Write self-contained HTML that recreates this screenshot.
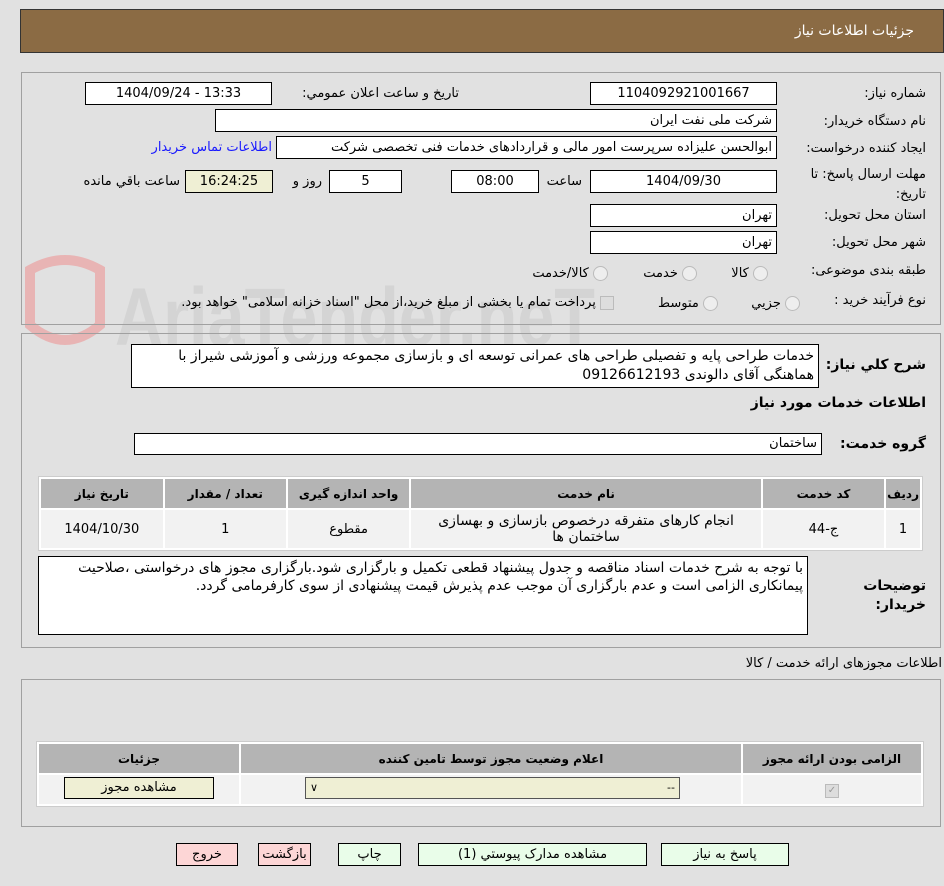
<!DOCTYPE html>
<html><head><meta charset="utf-8">
<style>
body{margin:0;width:944px;height:886px;background:#e1e1e1;font-family:"DejaVu Sans","Liberation Sans",sans-serif;font-size:13px;color:#000;position:relative;overflow:hidden;direction:rtl}
.a{position:absolute;white-space:nowrap}
.b{position:absolute;background:#fff;border:1px solid #000;box-sizing:border-box;padding:0 4px;line-height:22px;white-space:nowrap;overflow:hidden}
.c{text-align:center}
.p{position:absolute;border:1px solid #a0a0a0;box-sizing:border-box}
.lbl{position:absolute;white-space:nowrap;text-align:right}
table{border-collapse:separate;border-spacing:2px;position:absolute;background:#fff;border:1px solid #ccc}
th{background:#b4b4b4;font-weight:bold;font-size:12px;height:27px}
td{background:#f2f2f2;text-align:center}
.btn{position:absolute;border:1px solid #000;box-sizing:border-box;text-align:center;line-height:21px;height:23px}
.r{display:inline-block;width:13px;height:13px;border-radius:50%;border:1px solid #bbb;background:#eee;vertical-align:middle}
</style></head><body>
<div class="a" style="left:20px;top:9px;width:924px;height:44px;background:#8b6b44;border:1px solid #333;box-sizing:border-box"></div>
<div class="a" style="right:30px;top:23px;color:#fff;font-size:14px">جزئیات اطلاعات نیاز</div>

<!-- watermark -->
<svg class="a" style="left:20px;top:245px" width="580" height="110"><path d="M10 25 Q45 5 80 25 L80 80 Q45 110 10 80 Z" fill="none" stroke="#e8b4b4" stroke-width="10"/><text x="95" y="100" font-size="82" font-weight="bold" fill="#d4d4d4" font-family="Liberation Sans Narrow, Liberation Sans" textLength="480" lengthAdjust="spacingAndGlyphs" style="direction:ltr">AriaTender.neT</text></svg>

<div class="p" style="left:21px;top:72px;width:920px;height:253px"></div>
<div class="lbl" style="right:18px;top:86px">شماره نیاز:</div>
<div class="b c" style="left:590px;top:82px;width:187px;height:23px">1104092921001667</div>
<div class="lbl" style="right:485px;top:86px">تاریخ و ساعت اعلان عمومي:</div>
<div class="b c" style="left:85px;top:82px;width:187px;height:23px;direction:ltr">1404/09/24 - 13:33</div>
<div class="lbl" style="right:18px;top:114px">نام دستگاه خریدار:</div>
<div class="b" style="left:215px;top:109px;width:562px;height:23px">شرکت ملی نفت ایران</div>
<div class="lbl" style="right:18px;top:141px">ایجاد کننده درخواست:</div>
<div class="b" style="left:276px;top:136px;width:501px;height:23px">ابوالحسن علیزاده سرپرست امور مالی و قراردادهای خدمات فنی تخصصی شرکت</div>
<div class="lbl" style="right:672px;top:140px;color:#1a1aff">اطلاعات تماس خریدار</div>
<div class="lbl" style="right:18px;top:165px;width:140px;line-height:20px;white-space:normal">مهلت ارسال پاسخ: تا تاریخ:</div>
<div class="b c" style="left:590px;top:170px;width:187px;height:23px">1404/09/30</div>
<div class="lbl" style="right:362px;top:174px">ساعت</div>
<div class="b c" style="left:451px;top:170px;width:88px;height:23px">08:00</div>
<div class="b c" style="left:329px;top:170px;width:73px;height:23px">5</div>
<div class="lbl" style="right:622px;top:174px">روز و</div>
<div class="b c" style="left:185px;top:170px;width:88px;height:23px;background:#efefd4">16:24:25</div>
<div class="lbl" style="right:764px;top:174px">ساعت باقي مانده</div>
<div class="lbl" style="right:18px;top:208px">استان محل تحویل:</div>
<div class="b" style="left:590px;top:204px;width:187px;height:23px">تهران</div>
<div class="lbl" style="right:18px;top:235px">شهر محل تحویل:</div>
<div class="b" style="left:590px;top:231px;width:187px;height:23px">تهران</div>
<div class="lbl" style="right:18px;top:263px">طبقه بندی موضوعی:</div>
<div class="lbl" style="right:176px;top:266px"><span class="r"></span> کالا</div>
<div class="lbl" style="right:247px;top:266px"><span class="r"></span> خدمت</div>
<div class="lbl" style="right:336px;top:266px"><span class="r"></span> کالا/خدمت</div>
<div class="lbl" style="right:18px;top:293px">نوع فرآیند خرید :</div>
<div class="lbl" style="right:144px;top:296px"><span class="r"></span> جزيي</div>
<div class="lbl" style="right:226px;top:296px"><span class="r"></span> متوسط</div>
<div class="lbl" style="right:330px;top:295px"><span style="display:inline-block;width:12px;height:12px;background:#ddd;border:1px solid #bbb;vertical-align:middle"></span> پرداخت تمام یا بخشی از مبلغ خرید،از محل "اسناد خزانه اسلامی" خواهد بود.</div>

<div class="p" style="left:21px;top:333px;width:920px;height:315px"></div>
<div class="lbl" style="right:18px;top:357px;font-weight:bold;font-size:14px">شرح کلي نیاز:</div>
<div class="b" style="left:131px;top:344px;width:688px;height:44px;white-space:normal;line-height:19px;padding-top:2px;font-size:14px">خدمات طراحی پایه و تفصیلی طراحی های عمرانی توسعه ای و بازسازی مجموعه ورزشی و آموزشی شیراز با هماهنگی آقای دالوندی 09126612193</div>
<div class="lbl" style="right:18px;top:395px;font-weight:bold;font-size:14px">اطلاعات خدمات مورد نیاز</div>
<div class="lbl" style="right:18px;top:436px;font-weight:bold;font-size:14px">گروه خدمت:</div>
<div class="b" style="left:134px;top:433px;width:688px;height:22px;line-height:20px">ساختمان</div>
<table style="left:38px;top:476px;width:885px">
<tr><th style="width:28px">ردیف</th><th style="width:120px">کد خدمت</th><th style="width:350px">نام خدمت</th><th style="width:120px">واحد اندازه گیری</th><th style="width:120px">تعداد / مقدار</th><th style="width:120px">تاریخ نیاز</th></tr>
<tr><td style="height:36px">1</td><td>ج-44</td><td style="line-height:16px;font-size:14px;padding:0 4px">انجام کارهای متفرقه درخصوص بازسازی و بهسازی ساختمان ها</td><td>مقطوع</td><td>1</td><td>1404/10/30</td></tr>
</table>
<div class="lbl" style="right:18px;top:577px;font-weight:bold;font-size:14px;line-height:19px;width:80px;white-space:normal">توضیحات خریدار:</div>
<div class="b" style="left:38px;top:556px;width:770px;height:79px;white-space:normal;line-height:18px;padding-top:2px;font-size:14px">با توجه به شرح خدمات  اسناد مناقصه و جدول پیشنهاد قطعی  تکمیل و بارگزاری شود.بارگزاری مجوز های درخواستی ،صلاحیت پیمانکاری الزامی است و عدم بارگزاری آن موجب عدم پذیرش قیمت پیشنهادی  از سوی کارفرمامی گردد.</div>

<div class="lbl" style="right:2px;top:656px">اطلاعات مجوزهای ارائه خدمت / کالا</div>
<div class="p" style="left:21px;top:679px;width:920px;height:148px"></div>
<table style="left:36px;top:741px;width:888px">
<tr><th style="width:176px">الزامی بودن ارائه مجوز</th><th>اعلام وضعیت مجوز توسط تامین کننده</th><th style="width:198px">جزئیات</th></tr>
<tr><td style="height:27px"><span style="display:inline-block;width:12px;height:12px;background:#ddd;border:1px solid #bbb;color:#999;font-size:10px;line-height:12px">✓</span></td><td></td><td></td></tr>
</table>
<div class="b" style="left:305px;top:777px;width:375px;height:22px;line-height:20px;background:#efefd4;border-color:#555;direction:ltr;font-size:11px">&#8744;<span style="float:right">--</span></div>
<div class="btn" style="left:64px;top:777px;width:150px;height:22px;line-height:20px;background:#efefd4">مشاهده مجوز</div>

<div class="btn" style="left:661px;top:843px;width:128px;background:#e9fde9">پاسخ به نیاز</div>
<div class="btn" style="left:418px;top:843px;width:229px;background:#e9fde9">مشاهده مدارک پیوستي (1)</div>
<div class="btn" style="left:338px;top:843px;width:63px;background:#e9fde9">چاپ</div>
<div class="btn" style="left:258px;top:843px;width:53px;background:#fdd6d6">بازگشت</div>
<div class="btn" style="left:176px;top:843px;width:62px;background:#fdd6d6">خروج</div>
</body></html>
